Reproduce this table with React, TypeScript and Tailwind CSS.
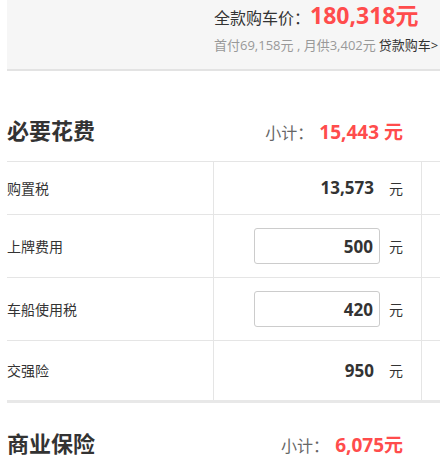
const font = "font-['Open_Sans','Noto_Sans_CJK_SC',sans-serif]";

type Row = {
  label: string;
  value: string;
  editable?: boolean;
  height: string;
};

const rows: Row[] = [
  { label: "购置税", value: "13,573", height: "h-[53px]" },
  { label: "上牌费用", value: "500", editable: true, height: "h-[63px]" },
  { label: "车船使用税", value: "420", editable: true, height: "h-[63px]" },
  { label: "交强险", value: "950", height: "h-[60px]" },
];

function FeeRow({ row }: { row: Row }) {
  return (
    <div className={`flex border-t border-[#e5e5e5] ${row.height}`}>
      <div className="w-[206px] flex items-center text-[14px] text-[#333]">
        {row.label}
      </div>
      <div className="w-[209px] border-x border-[#e5e5e5] flex items-center justify-end pr-[18px]">
        {row.editable ? (
          <input
            type="text"
            defaultValue={row.value}
            className="w-[126px] h-[36px] border border-[#cccccc] rounded-[3px] bg-white text-right pr-[6px] text-[17px] font-bold text-[#333] outline-none"
          />
        ) : (
          <span className="w-[126px] text-right pr-[6px] text-[17px] font-bold text-[#333]">
            {row.value}
          </span>
        )}
        <span className="ml-[9px] text-[14px] text-[#333]">元</span>
      </div>
      <div className="flex-1" />
    </div>
  );
}

export default function App() {
  return (
    <div className={`w-[440px] h-[470px] overflow-hidden bg-white ${font}`}>
      <div className="ml-[7px] w-[470px]">
        {/* price summary */}
        <div className="h-[71px] bg-[#f6f6f6] border-b-2 border-[#e3e3e3] pl-[207px]">
          <div className="flex items-baseline">
            <span className="text-[16px] leading-[22px] text-[#333]">全款购车价：</span>
            <span className="text-[23px] leading-[31px] font-bold text-[#ff4c4c]">180,318元</span>
          </div>
          <div className="mt-[4px] leading-[20px] text-[13px] whitespace-nowrap">
            <span className="text-[#999]">首付69,158元 , 月供3,402元</span>
            <span className="ml-[3px] text-[#333]">贷款购车&gt;</span>
          </div>
        </div>

        {/* 必要花费 */}
        <div className="w-[414px] h-[90px] pt-[44px] flex items-baseline justify-between pr-[18px] leading-[30px]">
          <span className="text-[22px] font-bold text-[#333]">必要花费</span>
          <span className="flex items-baseline">
            <span className="text-[16px] text-[#666]">小计：</span>
            <span className="ml-[6px] text-[19px] font-bold text-[#ff4c4c]">15,443 元</span>
          </span>
        </div>

        <div className="border-b-[3px] border-[#e8e8e8]">
          {rows.map((r) => (
            <FeeRow key={r.label} row={r} />
          ))}
        </div>

        {/* 商业保险 */}
        <div className="w-[414px] pt-[25px] flex items-baseline justify-between pr-[18px] leading-[30px]">
          <span className="text-[22px] font-bold text-[#333]">商业保险</span>
          <span className="flex items-baseline">
            <span className="text-[16px] text-[#666]">小计：</span>
            <span className="ml-[6px] text-[19px] font-bold text-[#ff4c4c]">6,075元</span>
          </span>
        </div>
      </div>
    </div>
  );
}
